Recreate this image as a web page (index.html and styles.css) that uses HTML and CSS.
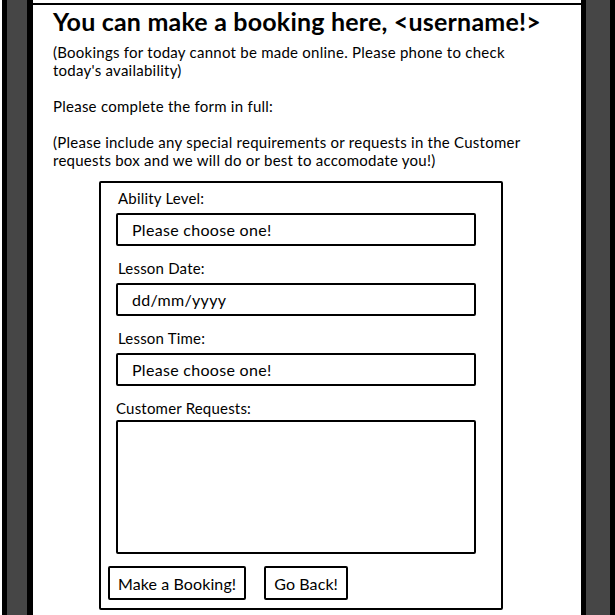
FILE: index.html
```html
<!DOCTYPE html>
<html lang="en">
<head>
    <meta charset="UTF-8">
    <meta name="viewport" content="width=device-width, initial-scale=1.0">
    <title>Make a Booking</title>
    <link rel="stylesheet" href="styles.css">
</head>
<body>
    <div class="device">
        <div class="rail rail-left"></div>
        <main class="screen">
            <div class="prev-section"></div>
            <section class="content">
                <h1>You can make a booking here, &lt;username!&gt;</h1>
                <p>(Bookings for today cannot be made online. Please phone to check today's availability)</p>
                <p>Please complete the form in full:</p>
                <p>(Please include any special requirements or requests in the Customer requests box and we will do or best to accomodate you!)</p>

                <form class="booking-form" id="bookingForm">
                    <label for="ability" class="field-label">Ability Level:</label>
                    <select id="ability" class="field">
                        <option>Please choose one!</option>
                        <option>Beginner</option>
                        <option>Intermediate</option>
                        <option>Advanced</option>
                    </select>

                    <label for="lessonDate" class="field-label">Lesson Date:</label>
                    <input type="text" id="lessonDate" class="field" placeholder="dd/mm/yyyy">

                    <label for="lessonTime" class="field-label">Lesson Time:</label>
                    <select id="lessonTime" class="field">
                        <option>Please choose one!</option>
                        <option>Morning</option>
                        <option>Afternoon</option>
                    </select>

                    <label for="requests" class="field-label requests-label">Customer Requests:</label>
                    <textarea id="requests" class="field requests"></textarea>

                    <div class="actions">
                        <button type="submit" class="btn">Make a Booking!</button>
                        <button type="button" class="btn">Go Back!</button>
                    </div>
                </form>
            </section>
        </main>
        <div class="rail rail-right"></div>
    </div>
</body>
</html>
```

FILE: styles.css
```css
body {
    margin: 0;
    padding: 0;
    background-color: white;
    font-family: Lato, "Open Sans", sans-serif;
    color: black;
}

.device {
    display: flex;
    height: 615px;
    padding-left: 2px;
    box-sizing: border-box;
}

.rail {
    background-color: #464646;
    border-style: solid;
    border-color: black;
    border-width: 0 5px;
    flex-shrink: 0;
}

.rail-left {
    width: 20px;
    border-right-width: 6px;
}

.rail-right {
    width: 24px;
}

.screen {
    flex: 1;
    overflow: hidden;
}

.prev-section {
    height: 3px;
    border-bottom: 2px solid black;
    margin-right: -2px;
}

.content {
    padding: 0 20px 0 20px;
}

h1 {
    margin: 2px 0 0 0;
    font-size: 25px;
    line-height: 28px;
    font-weight: bold;
    letter-spacing: 0.2px;
}

p {
    margin: 8px 0 18px 0;
    font-size: 15px;
    line-height: 18px;
    letter-spacing: 0.25px;
    max-width: 490px;
}

.booking-form {
    width: 404px;
    box-sizing: border-box;
    margin: -6px 0 0 46px;
    border: 2px solid black;
    border-radius: 2px;
    padding: 6px 8px 8px 15px;
}

.field-label {
    display: block;
    font-size: 15px;
    line-height: 18px;
    letter-spacing: 0.2px;
    margin-top: 13px;
    padding-left: 2px;
}

.field-label:first-child {
    margin-top: 0;
}

.requests-label {
    padding-left: 0;
}

.field {
    display: block;
    width: 360px;
    height: 33px;
    box-sizing: border-box;
    margin-top: 6px;
    padding: 0 14px;
    border: 2px solid black;
    border-radius: 2px;
    background: white;
    font-family: Lato, "Open Sans", sans-serif;
    font-size: 16px;
    letter-spacing: 0.3px;
    color: black;
    appearance: none;
    -webkit-appearance: none;
    outline: none;
}

.field::placeholder {
    color: black;
    opacity: 1;
}

.requests {
    height: 134px;
    margin-top: 3px;
    resize: none;
}

.actions {
    display: flex;
    gap: 18px;
    margin: 12px 0 0 -8px;
}

.btn {
    height: 34px;
    padding: 0 8px;
    border: 2px solid black;
    border-radius: 2px;
    background: white;
    font-family: Lato, "Open Sans", sans-serif;
    font-size: 16px;
    letter-spacing: 0.1px;
    color: black;
    cursor: pointer;
}
```
